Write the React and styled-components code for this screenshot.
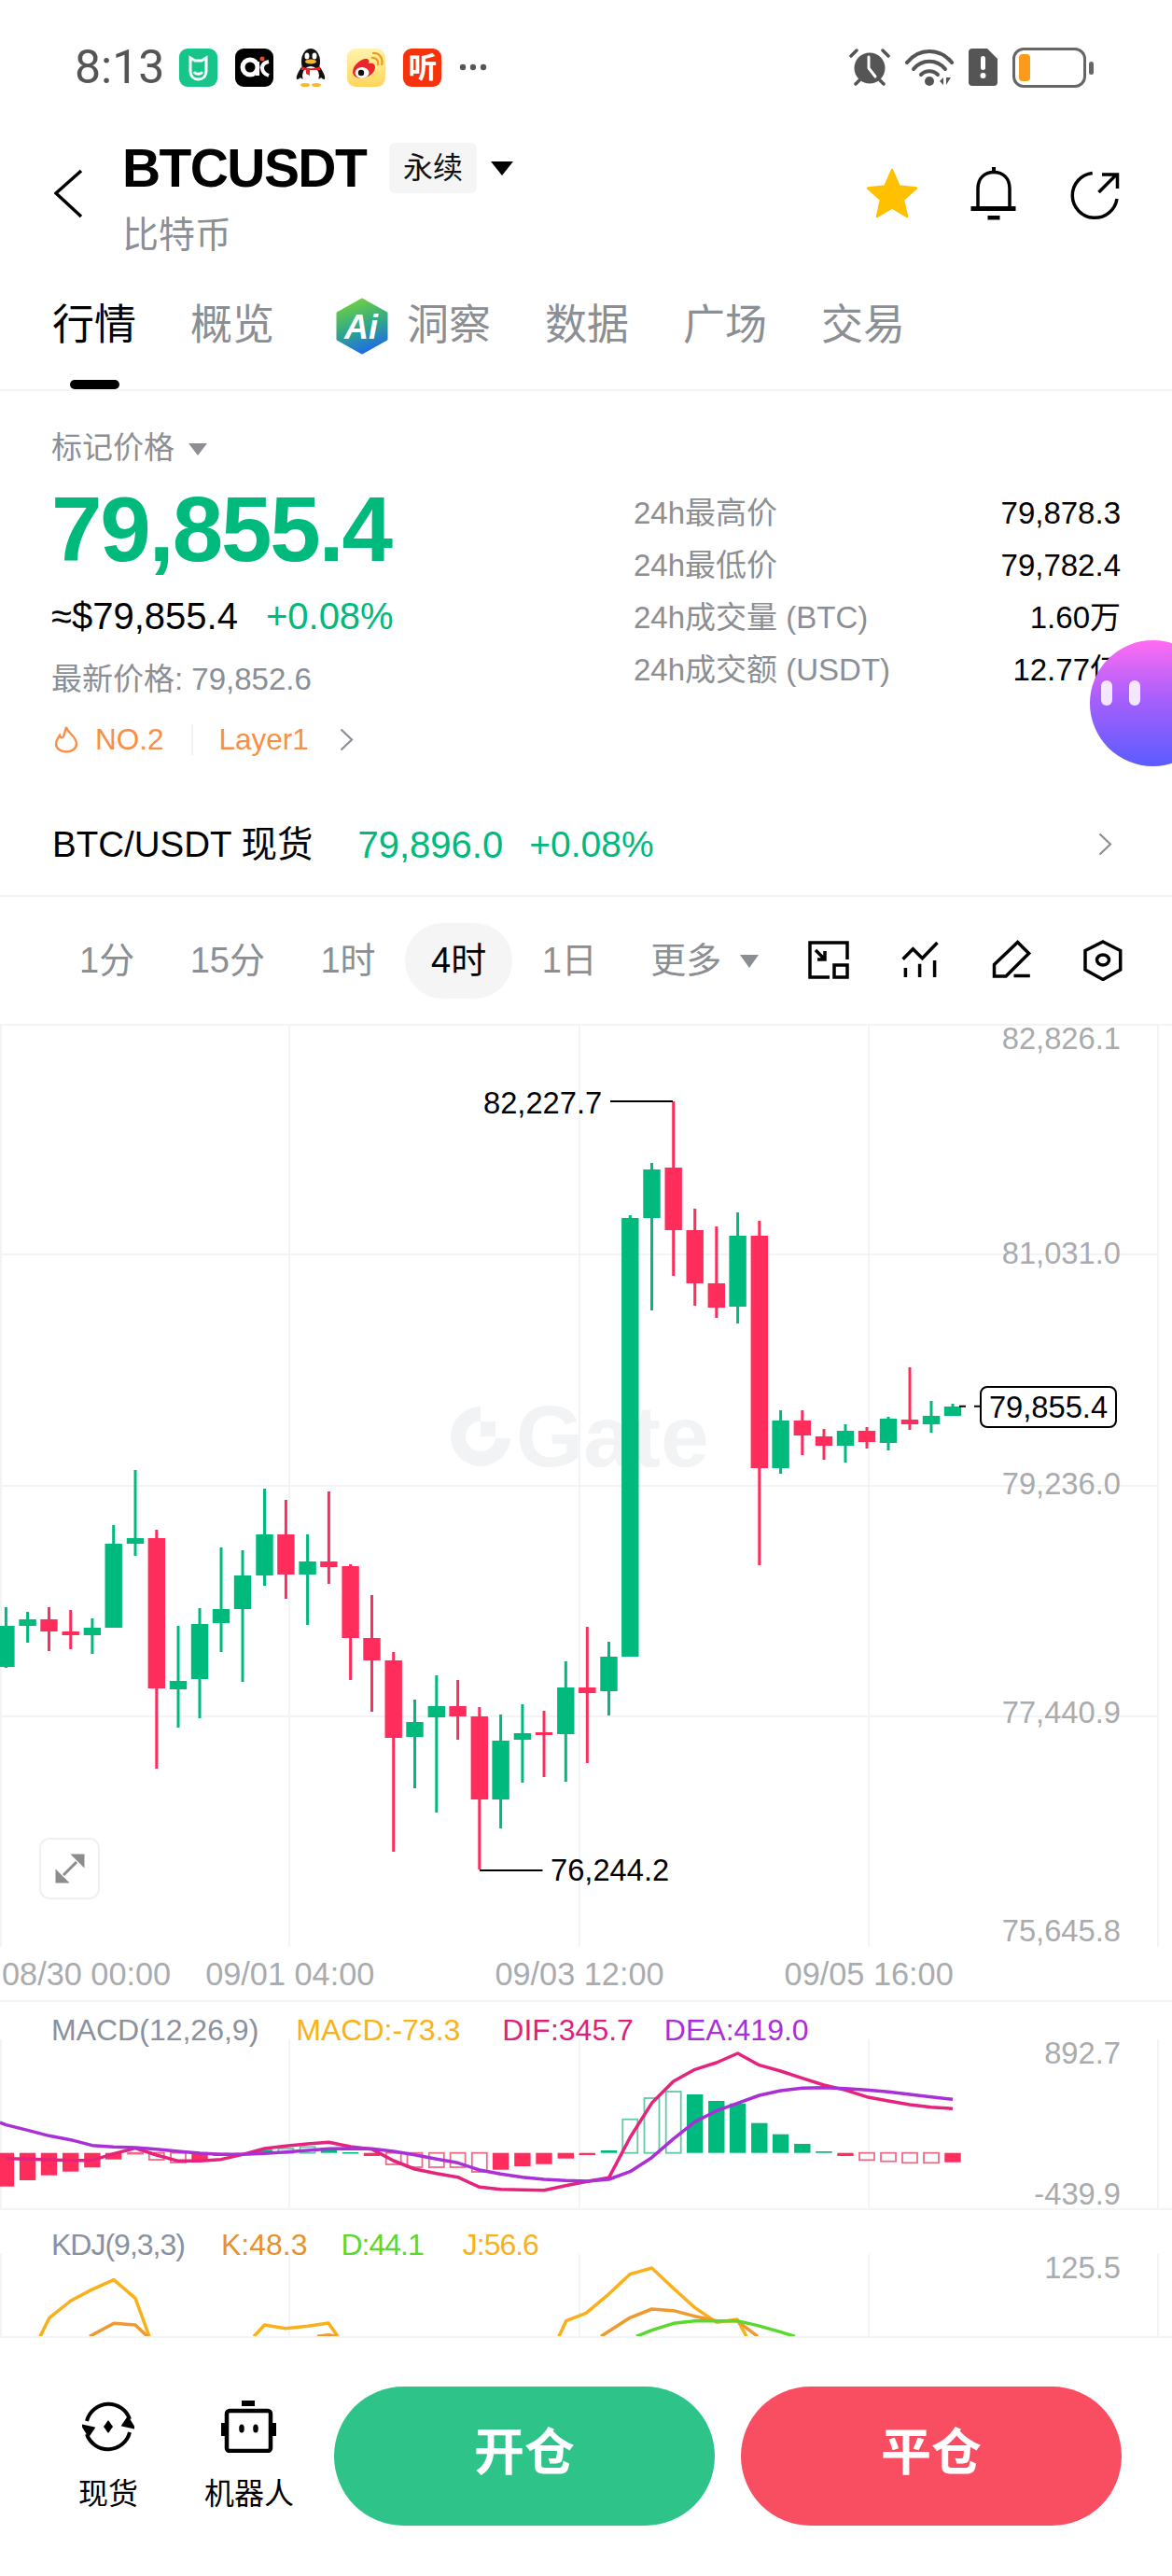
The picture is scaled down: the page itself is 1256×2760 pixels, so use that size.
import React from 'react';
import styled, { createGlobalStyle } from 'styled-components';

const GlobalStyle = createGlobalStyle`
  html, body {
    margin: 0;
    background: #fff;
    font-family: "Liberation Sans", "Noto Sans CJK SC", sans-serif;
  }
  * { box-sizing: border-box; }
`;

const GREEN = '#00b97c';
const RED = '#ff2d5c';
const GRAY = '#8b8e93';
const AXIS = '#a9abae';
const LINE = '#f3f4f5';

const Page = styled.div`
  position: relative;
  width: 1256px;
  height: 2760px;
  overflow: hidden;
  background: #fff;
`;

/* status bar */
const StatusBar = styled.div`
  display: flex;
  align-items: center;
  height: 120px;
  padding: 50px 84px 26px 80px;
`;

const Clock = styled.span`
  font-family: Roboto, sans-serif;
  font-size: 50px;
  line-height: 44px;
  color: #555;
  margin-right: 16px;
`;

const NoticeIcons = styled.div`
  display: flex;
  align-items: center;
  gap: 19px;
`;

const AppTile = styled.div`
  display: flex;
  align-items: center;
  justify-content: center;
  width: 41px;
  height: 41px;
  border-radius: 9px;
  background: ${p => p.$bg || 'transparent'};
  color: #fff;
  font-size: 31px;
  font-weight: 700;
  line-height: 1;
  overflow: hidden;
`;

const SystemIcons = styled.div`
  display: flex;
  align-items: center;
  margin-left: auto;
  gap: 16px;
`;

const BatteryShell = styled.div`
  position: relative;
  width: 79px;
  height: 43px;
  margin-right: 8px;
  border: 3px solid #666;
  border-radius: 12px;
  padding: 4px;
  &::after {
    content: '';
    position: absolute;
    right: -11px;
    top: 12px;
    width: 5px;
    height: 14px;
    border-radius: 3px;
    background: #666;
  }
`;

const BatteryLevel = styled.div`
  width: 12px;
  height: 100%;
  border-radius: 4px;
  background: #fb9a1b;
`;

/* header */
const Header = styled.div`
  display: flex;
  align-items: flex-start;
  height: 180px;
  padding: 33px 52px 0 58px;
`;

const BackButton = styled.svg`
  margin-top: 27px;
  margin-right: 41px;
`;

const TitleColumn = styled.div`
  display: flex;
  flex-direction: column;
`;

const TitleRow = styled.div`
  display: flex;
  align-items: center;
  height: 54px;
`;

const Symbol = styled.span`
  font-size: 57px;
  font-weight: 700;
  line-height: 54px;
  letter-spacing: -1.600px;
  color: #000;
  margin-right: 25px;
`;

const TypeBadge = styled.span`
  width: 94px;
  height: 54px;
  border-radius: 6px;
  background: #f5f5f5;
  font-size: 32px;
  line-height: 54px;
  text-align: center;
  color: #111;
  margin-right: 15px;
`;

const DownTriangle = styled.i`
  display: block;
  width: 0;
  height: 0;
  border-left: ${p => p.$w}px solid transparent;
  border-right: ${p => p.$w}px solid transparent;
  border-top: ${p => p.$h}px solid ${p => p.$color};
  margin-left: ${p => p.$left || 0}px;
  margin-top: ${p => p.$top || 0}px;
`;

const SubTitle = styled.span`
  margin-top: 23px;
  font-size: 39px;
  line-height: 44px;
  color: ${GRAY};
`;

const HeaderActions = styled.div`
  display: flex;
  gap: 49px;
  margin-left: auto;
  margin-top: 24px;
`;

/* tabs */
const Tabs = styled.div`
  display: flex;
  gap: 58px;
  height: 119px;
  padding: 27px 0 0 56px;
  border-bottom: 2px solid ${LINE};
`;

const Tab = styled.div`
  position: relative;
  display: flex;
  align-items: center;
  height: 44px;
  font-size: 45px;
  line-height: 44px;
  color: ${p => (p.$active ? '#000' : GRAY)};
  &::after {
    content: ${p => (p.$active ? "''" : 'none')};
    position: absolute;
    left: 50%;
    top: 80px;
    width: 53px;
    height: 10px;
    margin-left: -26px;
    border-radius: 5px;
    background: #000;
  }
`;

const AiMark = styled.svg`
  margin: 0 20px 0 8px;
`;

/* price info */
const Info = styled.div`
  display: flex;
  height: 431px;
  padding: 0 55px;
`;

const InfoLeft = styled.div`
  flex: 1;
  padding-top: 41px;
`;

const MarkLabel = styled.div`
  display: flex;
  align-items: center;
  font-size: 33px;
  line-height: 40px;
  color: ${GRAY};
`;

const BigPrice = styled.div`
  margin-top: 19px;
  font-size: 98px;
  font-weight: 700;
  line-height: 96px;
  letter-spacing: -2.200px;
  color: ${GREEN};
`;

const FiatRow = styled.div`
  display: flex;
  gap: 30px;
  margin-top: 21px;
  font-size: 40px;
  line-height: 48px;
  color: #000;
`;

const Change = styled.span`
  color: ${GREEN};
  font-size: ${p => p.$size || 40}px;
`;

const LatestPrice = styled.div`
  margin-top: 24px;
  font-size: 33px;
  line-height: 40px;
  color: ${GRAY};
`;

const TagRow = styled.div`
  display: flex;
  align-items: center;
  margin-top: 24px;
  height: 40px;
  font-size: 31.500px;
  line-height: 40px;
  color: #f98f47;
`;

const TagDivider = styled.i`
  width: 2px;
  height: 33px;
  margin: 0 28px 0 29px;
  background: #f1f1f1;
`;

const TagArrow = styled.span`
  display: flex;
  margin-left: 33px;
`;

const Stats = styled.div`
  display: flex;
  flex-direction: column;
  width: 522px;
  padding-top: 103px;
`;

const StatRow = styled.div`
  display: flex;
  justify-content: space-between;
  height: 56px;
  font-size: 33px;
  line-height: 56px;
`;

const StatLabel = styled.span`
  color: ${GRAY};
`;

const StatValue = styled.span`
  color: #000;
`;

const Assistant = styled.div`
  position: absolute;
  left: 1168px;
  top: 686px;
  display: flex;
  gap: 18px;
  width: 135px;
  height: 135px;
  padding: 43px 0 0 12px;
  border-radius: 50%;
  background: linear-gradient(180deg, #ff6cf2 0%, #a95ffb 45%, #5b5cff 100%);
`;

const AssistantEye = styled.i`
  width: 12px;
  height: 27px;
  border-radius: 6px;
  background: rgba(255, 255, 255, 0.85);
`;

/* spot row */
const SpotRow = styled.div`
  display: flex;
  align-items: center;
  height: 111px;
  padding: 0 64px 0 56px;
  border-bottom: 2px solid ${LINE};
  font-size: 38.500px;
  line-height: 48px;
  color: #000;
`;

const SpotPrice = styled.span`
  margin: 0 28px 0 48px;
  font-size: 40px;
  color: ${GREEN};
`;

const SpotArrow = styled.svg`
  margin-left: auto;
`;

/* interval toolbar */
const Toolbar = styled.div`
  display: flex;
  align-items: center;
  gap: 3.500px;
  height: 138px;
  padding-left: 57px;
  border-bottom: 2px solid ${LINE};
`;

const Interval = styled.div`
  display: flex;
  align-items: center;
  height: 81px;
  padding: 0 ${p => (p.$more ? 26 : 28)}px;
  border-radius: 41px;
  font-size: 38px;
  line-height: 78px;
  color: ${p => (p.$active ? '#000' : GRAY)};
  background: ${p => (p.$active ? '#f5f5f5' : 'transparent')};
`;

const ToolIcons = styled.div`
  display: flex;
  gap: 54px;
  margin-left: auto;
  padding-right: 52px;
`;

/* main chart */
const ChartPanel = styled.div`
  position: relative;
  height: 987px;
`;

const ChartSvg = styled.svg`
  position: relative;
  display: block;
`;

const Watermark = styled.div`
  position: absolute;
  left: 483px;
  top: 408px;
  display: flex;
  align-items: center;
  gap: 6px;
  height: 64px;
  font-size: 93px;
  font-weight: 700;
  line-height: 64px;
  color: #f1f3f4;
`;

const AxisLabel = styled.span`
  position: absolute;
  right: 55px;
  top: ${p => p.$y - 20}px;
  font-size: 32.700px;
  line-height: 40px;
  color: ${AXIS};
`;

const Callout = styled.span`
  position: absolute;
  left: ${p => p.$x}px;
  top: ${p => p.$y - 20}px;
  font-size: 32.700px;
  line-height: 40px;
  color: #000;
`;

const PriceTag = styled.div`
  position: absolute;
  left: 1050px;
  top: 386px;
  width: 147px;
  height: 45px;
  border: 2px solid #000;
  border-radius: 8px;
  background: #fff;
  font-size: 32.700px;
  line-height: 41px;
  text-align: center;
  color: #000;
`;

const ExpandButton = styled.div`
  position: absolute;
  left: 42px;
  top: 870px;
  display: flex;
  align-items: center;
  justify-content: center;
  width: 65px;
  height: 66px;
  border: 2px solid #f0f0f0;
  border-radius: 11px;
  background: #fff;
`;

const DateRow = styled.div`
  display: flex;
  align-items: center;
  height: 59px;
  padding-left: 2px;
  border-bottom: 2px solid ${LINE};
`;

const DateLabel = styled.span`
  margin-left: ${p => p.$gap}px;
  font-size: 34.300px;
  line-height: 40px;
  color: ${AXIS};
`;

/* indicator panels */
const IndicatorPanel = styled.div`
  position: relative;
  height: ${p => p.$height}px;
  border-bottom: ${p => (p.$last ? 'none' : `2px solid ${LINE}`)};
`;

const Legend = styled.div`
  position: absolute;
  left: 55px;
  top: ${p => p.$top}px;
  display: flex;
  font-size: 32px;
  line-height: 40px;
`;

const LegendItem = styled.span`
  margin-left: ${p => p.$left || 0}px;
  letter-spacing: ${p => p.$track || 0}px;
  color: ${p => p.$color};
`;

const PanelSvg = styled.svg`
  display: block;
`;

/* footer */
const Footer = styled.div`
  display: flex;
  height: 257px;
  padding: 52px 54px 0 58px;
  border-top: 2px solid ${LINE};
`;

const NavItem = styled.div`
  display: flex;
  flex-direction: column;
  align-items: center;
  width: ${p => p.$width}px;
  margin-right: ${p => p.$right}px;
  padding-top: 15px;
`;

const NavLabel = styled.span`
  margin-top: 24px;
  font-size: 32px;
  line-height: 40px;
  white-space: nowrap;
  color: #000;
`;

const TradeButton = styled.div`
  width: 408px;
  height: 149px;
  margin-right: ${p => p.$right || 0}px;
  border-radius: 75px;
  background: ${p => p.$bg};
  font-size: 54px;
  font-weight: 700;
  line-height: 142px;
  text-align: center;
  color: #fff;
`;

// x, wick top, body top, body bottom, wick bottom, up?
const candles = [
  [6.4, 1722, 1742, 1786, 1787, 1], [29.6, 1727, 1735, 1742, 1760, 1], [52.5, 1722, 1735, 1748, 1769, 0],
  [75.7, 1725, 1748, 1752, 1767, 0], [98.9, 1734, 1744, 1752, 1772, 1], [121.7, 1634, 1654, 1744, 1744, 1],
  [145, 1575, 1648, 1654, 1667, 1], [167.8, 1639, 1648, 1809, 1895, 0], [191, 1742, 1801, 1810, 1851, 1],
  [214, 1723, 1740, 1799, 1841, 1], [237, 1658, 1724, 1739, 1770, 1], [260, 1661, 1688, 1724, 1802, 1],
  [283.5, 1595, 1644, 1688, 1699, 1], [306.4, 1607, 1644, 1687, 1713, 0], [329.6, 1644, 1673, 1687, 1741, 1],
  [352.4, 1598, 1673, 1679, 1697, 0], [375.6, 1676, 1678, 1755, 1800, 0], [398.5, 1709, 1755, 1779, 1834, 0],
  [421.7, 1770, 1779, 1862, 1984, 0], [444.5, 1821, 1845, 1861, 1916, 1], [467.8, 1795, 1828, 1840, 1942, 1],
  [490.6, 1800, 1828, 1839, 1864, 0], [513.8, 1829, 1839, 1928, 2003, 0], [536.6, 1837, 1865, 1928, 1959, 1],
  [559.9, 1826, 1857, 1864, 1910, 1], [583, 1833, 1856, 1859, 1904, 0], [606.3, 1780, 1808, 1858, 1909, 1],
  [629.3, 1743, 1808, 1814, 1889, 0], [652.5, 1759, 1775, 1812, 1838, 1], [675.3, 1302, 1305, 1775, 1775, 1],
  [698.5, 1246, 1253, 1305, 1404, 1], [721.7, 1180, 1251, 1318, 1367, 0], [744.7, 1295, 1318, 1375, 1399, 0],
  [767.8, 1314, 1375, 1401, 1412, 0], [790.6, 1299, 1324, 1400, 1418, 1], [813.8, 1308, 1324, 1573, 1677, 0],
  [836.6, 1511, 1522, 1573, 1579, 1], [859.8, 1511, 1522, 1538, 1559, 0], [883, 1531, 1539, 1549, 1564, 0],
  [906, 1526, 1533, 1549, 1567, 1], [929, 1529, 1533, 1545, 1552, 0], [952, 1518, 1520, 1546, 1554, 1],
  [975, 1465, 1521, 1526, 1532, 0], [998, 1501, 1517, 1526, 1535, 1], [1021, 1504, 1507, 1517, 1517, 1],
];

const MACD_BASE = 2306.7;
// x, other edge of the bar, up?, hollow?
const macdBars = [
  [6.4, 2342.7, 0, 0], [29.6, 2336, 0, 0], [52.5, 2330.7, 0, 0], [75.7, 2326.7, 0, 0], [98.9, 2322.3, 0, 0],
  [121.7, 2313.7, 0, 0], [145, 2307.6, 0, 1], [167.8, 2314, 0, 1], [191, 2317, 0, 1], [214, 2315, 0, 0],
  [237, 2310, 0, 0], [260, 2307.6, 0, 0], [283.5, 2303.3, 1, 0], [306.4, 2302, 1, 1], [329.6, 2300.3, 1, 1],
  [352.4, 2301.7, 1, 0], [375.6, 2306, 1, 0], [398.5, 2310, 0, 0], [421.7, 2319, 0, 1], [444.5, 2322, 0, 1],
  [467.8, 2322, 0, 1], [490.6, 2322, 0, 1], [513.8, 2327, 0, 1], [536.6, 2324.7, 0, 0], [559.9, 2321, 0, 0],
  [583, 2318.7, 0, 0], [606.3, 2312.7, 0, 0], [629.3, 2309, 0, 0], [652.5, 2304, 1, 0], [675.3, 2270.7, 1, 1],
  [698.5, 2248, 1, 1], [721.7, 2241, 1, 1], [744.7, 2244, 1, 0], [767.8, 2251, 1, 0], [790.6, 2253.7, 1, 0],
  [813.8, 2274.7, 1, 0], [836.6, 2286.7, 1, 0], [859.8, 2297, 1, 0], [883, 2305, 1, 0], [906, 2310, 0, 0],
  [929, 2314.3, 0, 1], [952, 2315.7, 0, 1], [975, 2317.3, 0, 1], [998, 2317.3, 0, 1], [1021, 2316.7, 0, 0],
];

const X = candles.map(c => c[0]);
const toPoints = (rows, base = 2120, scale = 3) => rows.map(([x, v]) => `${x},${base + v / scale}`).join(' ');

const difLine = [578, 580, 582, 584, 584, 563, 545, 567, 586, 586, 581, 565, 546, 538, 531, 526, 540, 548, 585, 612, 626, 638, 670, 677, 679, 680, 665, 652, 640, 510, 400, 330, 292, 270, 240, 278, 297, 320, 342, 358, 380, 393, 405, 413, 418];
const deaLine = [470, 487, 505, 518, 536, 541, 543, 548, 555, 561, 565, 565, 562, 557, 552, 547, 546, 547, 555, 566, 580, 592, 615, 628, 638, 645, 649, 651, 645, 620, 575, 515, 460, 425, 400, 375, 360, 352, 350, 353, 358, 364, 372, 380, 388];
const zip = values => values.map((v, i) => [X[i], v]);

const jLines = [
  [[43, 1150], [53, 1090], [76, 1035], [98, 1000], [122, 968], [145, 1027], [160, 1150]],
  [[272, 1150], [283.5, 1113], [306, 1124], [330, 1117], [352, 1107], [362, 1150]],
  [[599, 1150], [606.7, 1100], [628, 1075], [652, 1015], [675, 950], [698.5, 930], [721.7, 995], [744.5, 1057], [768, 1105], [790, 1095], [800, 1150]],
];
const kLines = [
  [[96, 1150], [122, 1108], [145, 1113], [158, 1150]],
  [[340, 1150], [352, 1145], [360, 1150]],
  [[644, 1150], [675, 1090], [698.5, 1062], [721.7, 1067], [744.5, 1085], [768, 1100], [790, 1100], [812, 1150]],
];
const dLine = [[682, 1150], [698.5, 1130], [721.7, 1108], [744.5, 1100], [768, 1100], [790, 1100], [812, 1115], [836, 1135], [852, 1150]];

const GridLines = ({ xs, top, bottom }) =>
  xs.map(x => <line key={x} x1={x} x2={x} y1={top} y2={bottom} stroke={LINE} strokeWidth="2" />);

const Chevron = ({ size = 25 }) => (
  <svg width={size * 0.6} height={size} viewBox="0 0 15 25" fill="none" stroke={GRAY} strokeWidth="2.2">
    <path d="M1.5 1.5L13 12.5L1.5 23.5" />
  </svg>
);

const MiTile = () => (
  <AppTile $bg="#17c489">
    <svg width="41" height="41" viewBox="0 0 41 41" fill="none" stroke="#fff" strokeWidth="3">
      <path d="M12 10l5 3h7l5-3v14c0 6-4 9-8.500 9S12 30 12 24z" />
      <path d="M16 25c2 3 7 3 9 0" />
    </svg>
  </AppTile>
);

const BlackTile = () => (
  <AppTile $bg="#000">
    <svg width="41" height="41" viewBox="0 0 41 41">
      <circle cx="16" cy="20" r="8" fill="none" stroke="#fff" strokeWidth="5" />
      <rect x="22" y="14" width="4" height="15" fill="#fff" />
      <path d="M36 14c-5 1-7 4-7 7s2 6 7 8" fill="none" stroke="#fff" strokeWidth="4" />
      <circle cx="29" cy="11" r="2.500" fill="#f04a2c" />
    </svg>
  </AppTile>
);

const PenguinTile = () => (
  <AppTile>
    <svg width="32" height="44" viewBox="0 0 32 44">
      <ellipse cx="16" cy="16" rx="10" ry="14" fill="#111" />
      <path d="M6 22c-3 5-6 9-5 13 2 0 3-1 4-2 2 4 20 4 22 0 1 1 2 2 4 2 1-4-2-8-5-13z" fill="#111" />
      <ellipse cx="16" cy="31" rx="9" ry="10" fill="#fff" />
      <ellipse cx="12" cy="10" rx="2.500" ry="3.500" fill="#fff" />
      <ellipse cx="20" cy="10" rx="2.500" ry="3.500" fill="#fff" />
      <ellipse cx="16" cy="16" rx="6" ry="2.500" fill="#f9b72c" />
      <path d="M6 21c6 3 14 3 20 0v4H15v6l-4-2v-4H6z" fill="#e6262c" />
      <ellipse cx="10" cy="41" rx="5" ry="2" fill="#f9b72c" />
      <ellipse cx="22" cy="41" rx="5" ry="2" fill="#f9b72c" />
    </svg>
  </AppTile>
);

const WeiboTile = () => (
  <AppTile $bg="linear-gradient(180deg, #fff3b0, #ffd65c)">
    <svg width="41" height="41" viewBox="0 0 41 41">
      <path d="M6 25c0-7 9-14 14-14 3 0 4 2 3 5 5-1 7 1 7 4 0 6-8 12-15 12-5 0-9-3-9-7z" fill="#e8262b" />
      <ellipse cx="16" cy="26" rx="7.500" ry="6" fill="#fff" />
      <circle cx="15" cy="26" r="3.200" fill="#111" />
      <path d="M26 10c5-1 8 3 7 8M27 5c8-1 12 6 10 13" fill="none" stroke="#f39a1c" strokeWidth="2.200" />
    </svg>
  </AppTile>
);

const AlarmIcon = () => (
  <svg width="44" height="40" viewBox="0 0 44 40">
    <circle cx="22" cy="21" r="16.500" fill="#555" />
    <path d="M21 9v12l7 9" fill="none" stroke="#fff" strokeWidth="3" strokeLinecap="round" />
    <path d="M2 8l6-6M42 8l-6-6M7 38l4-4M37 38l-4-4" stroke="#555" strokeWidth="3.500" strokeLinecap="round" />
  </svg>
);

const WifiIcon = () => (
  <svg width="52" height="40" viewBox="0 0 52 40" fill="none" stroke="#555" strokeWidth="4" strokeLinecap="round">
    <path d="M2 15C15 -1 37 -1 50 15" />
    <path d="M9 22C18 11 34 11 43 22" />
    <path d="M17 28C22 23 30 23 35 28" />
    <circle cx="26" cy="35" r="5" fill="#555" stroke="none" />
    <path d="M37 35l4-4v8zM44 31v8l5-8z" fill="#555" stroke="none" />
  </svg>
);

const SimIcon = () => (
  <svg width="31" height="40" viewBox="0 0 31 40">
    <path d="M4 0H20L31 11V36a4 4 0 0 1-4 4H4a4 4 0 0 1-4-4V4a4 4 0 0 1 4-4z" fill="#555" />
    <rect x="13" y="8" width="5" height="15" rx="2.500" fill="#fff" />
    <circle cx="15.500" cy="29" r="3" fill="#fff" />
  </svg>
);

const Star = () => (
  <svg width="60" height="60" viewBox="0 0 60 60">
    <path
      d="M30 5L37.500 22.500L56 24.500L42 37L46 55L30 45.500L14 55L18 37L4 24.500L22.500 22.500Z"
      fill="#ffc000"
      stroke="#ffc000"
      strokeWidth="2.500"
      strokeLinejoin="round"
    />
  </svg>
);

const Bell = () => (
  <svg width="60" height="60" viewBox="0 0 60 60">
    <path d="M13 45V25C13 14 20 7.500 30 7.500S47 14 47 25V45" fill="none" stroke="#000" strokeWidth="3.500" />
    <rect x="5.500" y="44" width="48" height="5" fill="#000" />
    <rect x="23.500" y="54" width="13" height="4.500" fill="#000" />
    <rect x="28" y="2" width="4" height="6" fill="#000" />
  </svg>
);

const Share = () => (
  <svg width="60" height="60" viewBox="0 0 60 60" fill="none" stroke="#000" strokeWidth="3.500">
    <path d="M26.700 8.500A24 24 0 1 0 53 36" />
    <path d="M33.500 29L52 10.500M37 10H53.500V25" />
  </svg>
);

const AiIcon = () => (
  <AiMark width="56" height="61" viewBox="0 0 56 61">
    <defs>
      <linearGradient id="aiGrad" x1="0.3" y1="0" x2="0.6" y2="1">
        <stop offset="0" stopColor="#6fd13f" />
        <stop offset="0.55" stopColor="#2ea58e" />
        <stop offset="1" stopColor="#1f69ea" />
      </linearGradient>
    </defs>
    <path d="M28 2L54 16.500V44.500L28 59L2 44.500V16.500Z" fill="url(#aiGrad)" stroke="url(#aiGrad)" strokeWidth="3" strokeLinejoin="round" />
    <text x="27" y="44" textAnchor="middle" fontFamily="Liberation Sans" fontWeight="700" fontStyle="italic" fontSize="36" fill="#fff">Ai</text>
  </AiMark>
);

const FlameSvg = styled.svg`
  margin: 0 18px 0 3px;
`;

const Flame = () => (
  <FlameSvg width="26" height="30" viewBox="0 0 26 30" fill="none" stroke="#f98f47" strokeWidth="2.400">
    <path d="M13 2c1 6 11 10 11 18a11 8.500 0 0 1-22 0c0-4 2-6 4-9 1 3 3 3 4 1 1-3 2-6 3-10z" />
  </FlameSvg>
);

const GateLogo = () => (
  <svg width="64" height="64" viewBox="0 0 64 64" fill="#f1f3f4">
    <path d="M32 0A32 32 0 1 0 64 34H48A16 16 0 1 1 32 16Z" />
    <rect x="32" y="16" width="16" height="16" />
  </svg>
);

const SpotIcon = () => (
  <svg width="56" height="56" viewBox="0 0 56 56" fill="none" stroke="#000" strokeWidth="4">
    <path d="M5 22A24 24 0 0 1 51 20" />
    <path d="M51 34A24 24 0 0 1 5 36" />
    <path d="M45 26L54 28L49 20Z" fill="#000" />
    <path d="M11 30L2 28L7 36Z" fill="#000" />
    <path d="M28 21L33 28L28 35L23 28Z" fill="#000" stroke="none" />
  </svg>
);

const RobotIcon = () => (
  <svg width="60" height="56" viewBox="0 0 60 56" fill="none">
    <rect x="22" y="0" width="14" height="6" fill="#000" />
    <rect x="6" y="11" width="47" height="43" rx="3" stroke="#000" strokeWidth="4.500" />
    <rect x="0" y="24" width="4" height="14" fill="#000" />
    <rect x="55" y="24" width="4" height="14" fill="#000" />
    <ellipse cx="22" cy="30" rx="2.800" ry="4.500" fill="#000" />
    <ellipse cx="37" cy="30" rx="2.800" ry="4.500" fill="#000" />
  </svg>
);

const ToolSvg = ({ children }) => (
  <svg width="44" height="44" viewBox="0 0 44 44" fill="none" stroke="#000" strokeWidth="3.500">
    {children}
  </svg>
);

const App = () => (
  <Page>
    <GlobalStyle />
    <StatusBar>
      <Clock>8:13</Clock>
      <NoticeIcons>
        <MiTile />
        <BlackTile />
        <PenguinTile />
        <WeiboTile />
        <AppTile $bg="#f5320b">听</AppTile>
        <svg width="30" height="8" viewBox="0 0 30 8" fill="#555">
          <circle cx="4" cy="4" r="3.200" />
          <circle cx="15" cy="4" r="3.200" />
          <circle cx="26" cy="4" r="3.200" />
        </svg>
      </NoticeIcons>
      <SystemIcons>
        <AlarmIcon />
        <WifiIcon />
        <SimIcon />
        <BatteryShell>
          <BatteryLevel />
        </BatteryShell>
      </SystemIcons>
    </StatusBar>

    <Header>
      <BackButton width="32" height="54" viewBox="0 0 32 54" fill="none" stroke="#000" strokeWidth="3.500">
        <path d="M29 3L2 27L29 52" />
      </BackButton>
      <TitleColumn>
        <TitleRow>
          <Symbol>BTCUSDT</Symbol>
          <TypeBadge>永续</TypeBadge>
          <DownTriangle $w={12} $h={15} $color="#000" />
        </TitleRow>
        <SubTitle>比特币</SubTitle>
      </TitleColumn>
      <HeaderActions>
        <Star />
        <Bell />
        <Share />
      </HeaderActions>
    </Header>

    <Tabs>
      <Tab $active>行情</Tab>
      <Tab>概览</Tab>
      <Tab>
        <AiIcon />
        洞察
      </Tab>
      <Tab>数据</Tab>
      <Tab>广场</Tab>
      <Tab>交易</Tab>
    </Tabs>

    <Info>
      <InfoLeft>
        <MarkLabel>
          标记价格
          <DownTriangle $w={10} $h={13} $color={GRAY} $left={15} $top={2} />
        </MarkLabel>
        <BigPrice>79,855.4</BigPrice>
        <FiatRow>
          ≈$79,855.4
          <Change>+0.08%</Change>
        </FiatRow>
        <LatestPrice>最新价格: 79,852.6</LatestPrice>
        <TagRow>
          <Flame />
          NO.2
          <TagDivider />
          Layer1
          <TagArrow>
            <Chevron />
          </TagArrow>
        </TagRow>
      </InfoLeft>
      <Stats>
        <StatRow>
          <StatLabel>24h最高价</StatLabel>
          <StatValue>79,878.3</StatValue>
        </StatRow>
        <StatRow>
          <StatLabel>24h最低价</StatLabel>
          <StatValue>79,782.4</StatValue>
        </StatRow>
        <StatRow>
          <StatLabel>24h成交量 (BTC)</StatLabel>
          <StatValue>1.60万</StatValue>
        </StatRow>
        <StatRow>
          <StatLabel>24h成交额 (USDT)</StatLabel>
          <StatValue>12.77亿</StatValue>
        </StatRow>
      </Stats>
    </Info>

    <Assistant>
      <AssistantEye />
      <AssistantEye />
    </Assistant>

    <SpotRow>
      BTC/USDT 现货
      <SpotPrice>79,896.0</SpotPrice>
      <Change $size={39}>+0.08%</Change>
      <SpotArrow width="15" height="25" viewBox="0 0 15 25" fill="none" stroke={GRAY} strokeWidth="2.200">
        <path d="M1.500 1.500L13 12.500L1.500 23.500" />
      </SpotArrow>
    </SpotRow>

    <Toolbar>
      <Interval>1分</Interval>
      <Interval>15分</Interval>
      <Interval>1时</Interval>
      <Interval $active>4时</Interval>
      <Interval>1日</Interval>
      <Interval $more>
        更多
        <DownTriangle $w={10} $h={14} $color={GRAY} $left={20} $top={2} />
      </Interval>
      <ToolIcons>
        <ToolSvg>
          <path d="M23 40H2V3H42V21" />
          <rect x="28" y="27" width="14" height="13" />
          <path d="M8 11L17 20M18 12V21H10" />
        </ToolSvg>
        <ToolSvg>
          <path d="M3.600 20.700L14.400 9.700L24.400 19.700L40.500 3M6.400 30V40M21.600 25.700V40M37.600 22V40" />
        </ToolSvg>
        <ToolSvg>
          <path d="M28.600 2.500L40.600 14.500L16 39H3.500V26.500ZM24.500 38.500H41.800" />
        </ToolSvg>
        <ToolSvg>
          <path d="M22 2L40.700 11.500V32L22 42.500L3 32V11.500Z" />
          <ellipse cx="22" cy="21.500" rx="6.500" ry="5.500" />
        </ToolSvg>
      </ToolIcons>
    </Toolbar>

    <ChartPanel>
      <Watermark>
        <GateLogo />
        Gate
      </Watermark>
      <ChartSvg width="1256" height="987" viewBox="0 1099 1256 987">
        <GridLines xs={[1, 310, 621, 931, 1241]} top={1099} bottom={2086} />
        {[1344, 1592, 1839].map(y => (
          <line key={y} x1="0" x2="1241" y1={y} y2={y} stroke={LINE} strokeWidth="2" />
        ))}
        {candles.map(([x, wt, bt, bb, wb, up]) => (
          <g key={x} fill={up ? GREEN : RED}>
            <rect x={x - 1.5} y={wt} width="3" height={wb - wt} />
            <rect x={x - 9.2} y={bt} width="18.400" height={bb - bt} />
          </g>
        ))}
        <path d="M654 1180H721" stroke="#000" strokeWidth="2" />
        <path d="M514 2004H581.500" stroke="#000" strokeWidth="2" />
        <path d="M1028 1506.700H1035M1044 1506.700H1050" stroke="#000" strokeWidth="2" />
      </ChartSvg>
      <Callout $x={518} $y={83}>82,227.7</Callout>
      <Callout $x={590} $y={905}>76,244.2</Callout>
      <AxisLabel $y={14}>82,826.1</AxisLabel>
      <AxisLabel $y={244}>81,031.0</AxisLabel>
      <AxisLabel $y={491}>79,236.0</AxisLabel>
      <AxisLabel $y={736}>77,440.9</AxisLabel>
      <AxisLabel $y={970}>75,645.8</AxisLabel>
      <PriceTag>79,855.4</PriceTag>
      <ExpandButton>
        <svg width="32" height="32" viewBox="0 0 32 32" fill="#8c8c8c" stroke="#8c8c8c" strokeWidth="3">
          <path d="M20 2H30V12ZM12 30H2V20ZM23 9L9 23" />
        </svg>
      </ExpandButton>
    </ChartPanel>

    <DateRow>
      <DateLabel $gap={0}>08/30 00:00</DateLabel>
      <DateLabel $gap={37}>09/01 04:00</DateLabel>
      <DateLabel $gap={129}>09/03 12:00</DateLabel>
      <DateLabel $gap={129}>09/05 16:00</DateLabel>
    </DateRow>

    <IndicatorPanel $height={223}>
      <PanelSvg width="1256" height="221" viewBox="0 2145 1256 221">
        <GridLines xs={[1, 310, 621, 931, 1241]} top={2185} bottom={2366} />
        {macdBars.map(([x, edge, up, hollow]) => {
          const y = Math.min(edge, MACD_BASE);
          const h = Math.abs(edge - MACD_BASE);
          const color = up ? (hollow ? '#62c9a7' : GREEN) : hollow ? '#ee6b88' : RED;
          return hollow ? (
            <rect key={x} x={x - 8} y={y} width="16" height={h} fill="none" stroke={color} strokeWidth="1.800" />
          ) : (
            <rect key={x} x={x - 8.7} y={y} width="17.400" height={Math.max(h, 1.5)} fill={color} />
          );
        })}
        <polyline points={toPoints(zip(difLine))} fill="none" stroke="#e5227c" strokeWidth="3.500" strokeLinejoin="round" />
        <polyline points={toPoints([[0, 462], ...zip(deaLine)])} fill="none" stroke="#a92fd6" strokeWidth="3.500" strokeLinejoin="round" />
      </PanelSvg>
      <Legend $top={10}>
        <LegendItem $color="#8a919e">MACD(12,26,9)</LegendItem>
        <LegendItem $color="#f9b217" $left={40}>MACD:-73.3</LegendItem>
        <LegendItem $color="#e01f7a" $left={45}>DIF:345.7</LegendItem>
        <LegendItem $color="#a92fd6" $left={33}>DEA:419.0</LegendItem>
      </Legend>
      <AxisLabel $y={55}>892.7</AxisLabel>
      <AxisLabel $y={206}>-439.9</AxisLabel>
    </IndicatorPanel>

    <IndicatorPanel $height={135} $last>
      <PanelSvg width="1256" height="135" viewBox="0 2368 1256 135">
        <GridLines xs={[1, 310, 621, 931, 1241]} top={2415} bottom={2503} />
        {jLines.map((l, i) => (
          <polyline key={i} points={toPoints(l)} fill="none" stroke="#fab01a" strokeWidth="3.500" strokeLinejoin="round" />
        ))}
        {kLines.map((l, i) => (
          <polyline key={i} points={toPoints(l)} fill="none" stroke="#ee9a2e" strokeWidth="3.500" strokeLinejoin="round" />
        ))}
        <polyline points={toPoints(dLine)} fill="none" stroke="#5ad92d" strokeWidth="3.500" strokeLinejoin="round" />
      </PanelSvg>
      <Legend $top={17}>
        <LegendItem $color="#8a919e" $track={-1}>KDJ(9,3,3)</LegendItem>
        <LegendItem $color="#e8902e" $left={39}>K:48.3</LegendItem>
        <LegendItem $color="#5ad92d" $left={36} $track={-1}>D:44.1</LegendItem>
        <LegendItem $color="#fab01a" $left={42} $track={-1}>J:56.6</LegendItem>
      </Legend>
      <AxisLabel $y={62}>125.5</AxisLabel>
    </IndicatorPanel>

    <Footer>
      <NavItem $width={116} $right={42}>
        <SpotIcon />
        <NavLabel>现货</NavLabel>
      </NavItem>
      <NavItem $width={102} $right={40}>
        <RobotIcon />
        <NavLabel>机器人</NavLabel>
      </NavItem>
      <TradeButton $bg="#2dc389" $right={28}>开仓</TradeButton>
      <TradeButton $bg="#f94e62">平仓</TradeButton>
    </Footer>
  </Page>
);

export default App;
